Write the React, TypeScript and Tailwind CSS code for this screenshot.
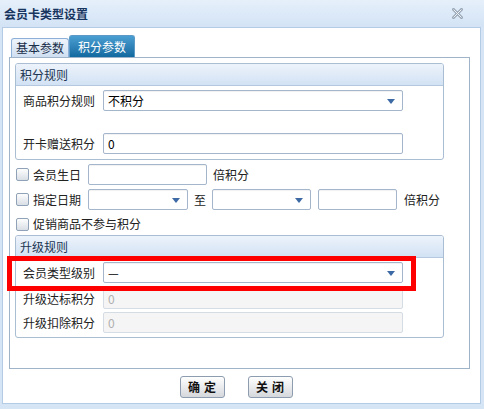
import React from "react";

const font = { fontFamily: '"Noto Sans CJK SC", "Noto Sans", sans-serif' };

function Arrow() {
  return (
    <svg width="8" height="5" viewBox="0 0 8 5" className="absolute right-[7px] top-[8px]">
      <path d="M0 0 H8 L4 5 Z" fill="#3d6aa5" />
    </svg>
  );
}

function SelectBox({ value, w }: { value?: string; w: string }) {
  return (
    <div
      className={`relative h-[21px] ${w} border border-[#a3b6cc] rounded-[2px] bg-white flex items-center pl-[4px] text-[12px] text-black shadow-[inset_0_1px_1px_rgba(0,0,0,0.06)]`}
    >
      {value}
      <Arrow />
    </div>
  );
}

function TextBox({ value, w, disabled }: { value?: string; w: string; disabled?: boolean }) {
  return (
    <div
      className={`h-[21px] ${w} border rounded-[2px] flex items-center pl-[4px] text-[12px] ${
        disabled
          ? "bg-[#f5f5f5] border-[#d6dce3] text-[#b0b0b0]"
          : "bg-white border-[#a3b6cc] text-black shadow-[inset_0_1px_1px_rgba(0,0,0,0.06)]"
      }`}
    >
      {value}
    </div>
  );
}

function Check() {
  return (
    <div className="w-[13px] h-[13px] border border-[#8fa2b8] rounded-[2px] bg-gradient-to-b from-[#fdfdfd] to-[#d9dfe6] shrink-0" />
  );
}

function SectionHead({ title }: { title: string }) {
  return (
    <div className="h-[22px] bg-gradient-to-b from-[#edf3fb] to-[#d2e2f4] border-b border-[#b4c9e0] flex items-center pl-[4px] text-[12px] text-[#1b3552] rounded-t-[2px]">
      {title}
    </div>
  );
}

function Row({ label, children, mt }: { label: string; children: React.ReactNode; mt: string }) {
  return (
    <div className={`flex items-center h-[21px] ${mt}`}>
      <div className="w-[80px] text-[12px] text-[#222]">{label}</div>
      {children}
    </div>
  );
}

export default function App() {
  return (
    <div className="relative w-[484px] h-[409px] bg-[#d6e5f6] overflow-hidden" style={font}>
      <div className="h-[27px] bg-gradient-to-b from-[#e6f0fb] to-[#d3e3f5] flex items-center justify-between pl-[4px] pr-[21px]">
        <span className="text-[12px] font-bold text-[#17355e]">会员卡类型设置</span>
        <svg width="11" height="11" viewBox="0 0 11 11">
          <path d="M1.5 1.5 L9.5 9.5 M9.5 1.5 L1.5 9.5" stroke="#9aa7b6" strokeWidth="3" strokeLinecap="square" />
          <path d="M1.5 1.5 L9.5 9.5 M9.5 1.5 L1.5 9.5" stroke="#eef2f6" strokeWidth="1" />
        </svg>
      </div>

      <div className="ml-[2px] mr-[3px] h-[377px] border border-[#b3cbe4] bg-white flex flex-col pt-[7px] pl-[6px]">
        <div className="flex items-end h-[22px] pl-[2px]">
          <div className="h-[19px] w-[58px] border border-b-0 border-[#8db0d8] rounded-t-[3px] bg-gradient-to-b from-[#eef4fb] to-[#cfdff1] flex items-center justify-center text-[12px] text-[#1a2f4a]">
            基本参数
          </div>
          <div className="h-[22px] w-[66px] border border-b-0 border-[#5b9ac6] rounded-t-[3px] bg-gradient-to-b from-[#4a9fd2] to-[#11699f] flex items-center justify-center text-[12px] text-white">
            积分参数
          </div>
        </div>

        <div className="w-[461px] h-[312px] border border-[#9fb4c8] pt-[5px] pl-[5px]">
          <div className="w-[429px] border border-[#a9bdd3] rounded-[3px]">
            <SectionHead title="积分规则" />
            <div className="pl-[7px] pt-[4px] pb-[5px]">
              <Row label="商品积分规则" mt="mt-0">
                <SelectBox value="不积分" w="w-[300px]" />
              </Row>
              <Row label="开卡赠送积分" mt="mt-[22px]">
                <TextBox value="0" w="w-[300px]" />
              </Row>
            </div>
          </div>

          <div className="flex items-center h-[21px] mt-[4px] pl-[1px] text-[12px] text-[#222]">
            <Check />
            <span className="ml-[4px] w-[55px]">会员生日</span>
            <TextBox w="w-[119px]" />
            <span className="ml-[6px]">倍积分</span>
          </div>
          <div className="flex items-center h-[21px] mt-[4px] pl-[1px] text-[12px] text-[#222]">
            <Check />
            <span className="ml-[4px] w-[55px]">指定日期</span>
            <SelectBox w="w-[100px]" />
            <span className="ml-[6px] w-[18px]">至</span>
            <SelectBox w="w-[99px]" />
            <TextBox w="w-[79px] ml-[7px]" />
            <span className="ml-[7px]">倍积分</span>
          </div>
          <div className="flex items-center h-[18px] mt-[5px] pl-[1px] text-[12px] text-[#222]">
            <Check />
            <span className="ml-[4px]">促销商品不参与积分</span>
          </div>

          <div className="w-[429px] mt-[2px] border border-[#a9bdd3] rounded-[3px]">
            <SectionHead title="升级规则" />
            <div className="pl-[7px] pt-[4px] pb-[4px]">
              <Row label="会员类型级别" mt="mt-0">
                <SelectBox value="—" w="w-[300px]" />
              </Row>
              <Row label="升级达标积分" mt="mt-[5px]">
                <TextBox value="0" w="w-[300px]" disabled />
              </Row>
              <Row label="升级扣除积分" mt="mt-[3px]">
                <TextBox value="0" w="w-[300px]" disabled />
              </Row>
            </div>
          </div>
        </div>

        <div className="flex justify-center gap-[23px] mt-[7px] pr-[17px]">
          <button className="w-[45px] h-[22px] border border-[#8d9cae] rounded-[3px] bg-gradient-to-b from-[#ffffff] to-[#d5d8dc] text-[12px] font-bold text-[#111] tracking-[4px] pl-[4px]">
            确定
          </button>
          <button className="w-[45px] h-[22px] border border-[#8d9cae] rounded-[3px] bg-gradient-to-b from-[#ffffff] to-[#d5d8dc] text-[12px] font-bold text-[#111] tracking-[4px] pl-[4px]">
            关闭
          </button>
        </div>
      </div>

      <div className="absolute left-[7px] top-[256px] w-[409px] h-[35px] border-[5px] border-[#ff0000]" />
    </div>
  );
}
